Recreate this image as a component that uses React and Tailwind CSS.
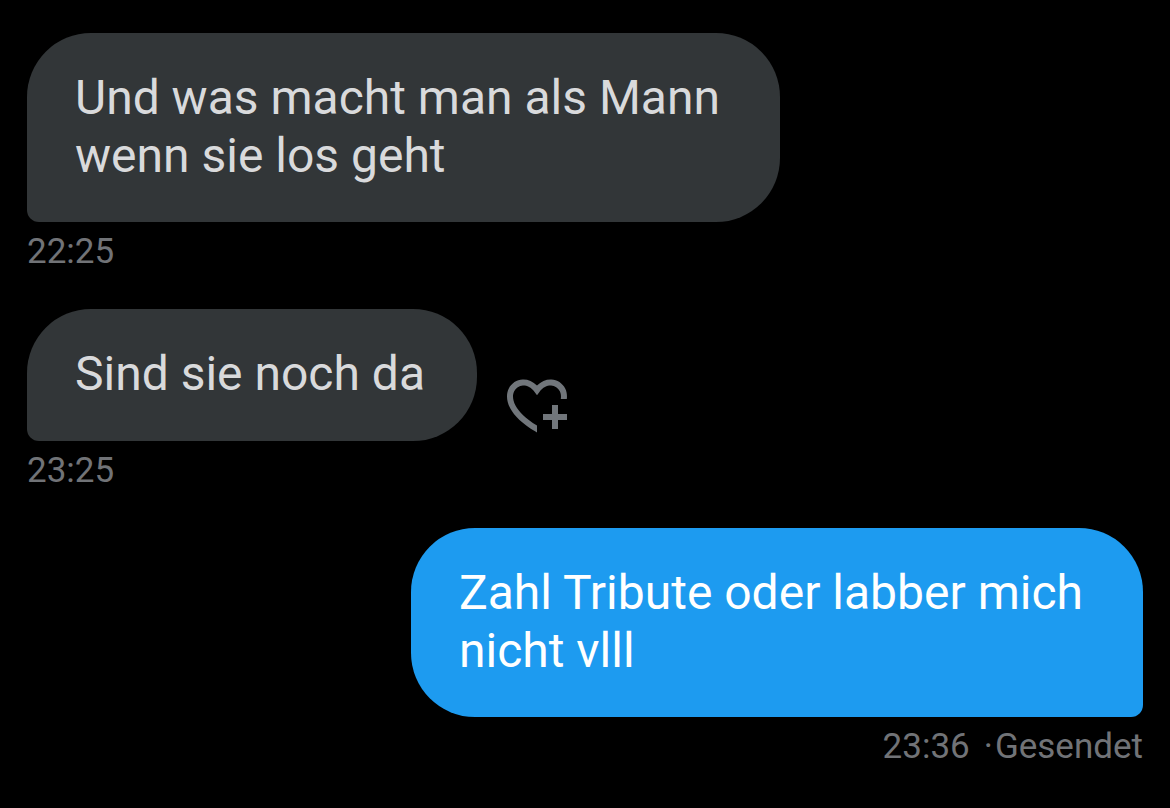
import React from "react";
import clsx from "clsx";

const messages = [
  { id: 1, text: "Und was macht man als Mann wenn sie los geht", time: "22:25", width: "w-[753px]" },
  { id: 2, text: "Sind sie noch da", time: "23:25", width: "w-[450px]", canReact: true },
  { id: 3, text: "Zahl Tribute oder labber mich nicht vlll", time: "23:36", width: "w-[732px]", mine: true, status: "Gesendet" },
];

function ReactButton() {
  return (
    <button type="button" aria-label="Reagieren" className="shrink-0 text-[#71767b]">
      <svg viewBox="0 0 24 24" className="size-18" fill="currentColor" aria-hidden="true">
        <path d="M17 12v3h-2.998v2h3v3h2v-3h3v-2h-3.001v-3H17zm-5 6.839c-3.871-2.34-6.053-4.639-7.127-6.609-1.112-2.04-1.031-3.7-.479-4.82.561-1.13 1.667-1.84 2.91-1.91 1.222-.06 2.68.51 3.892 2.16l.806 1.09.805-1.09c1.211-1.65 2.668-2.22 3.89-2.16 1.242.07 2.347.78 2.908 1.91.334.677.49 1.554.321 2.59h2.011c.153-1.283-.039-2.469-.539-3.48-.887-1.79-2.647-2.91-4.601-3.01-1.65-.09-3.367.56-4.796 2.01-1.43-1.45-3.147-2.1-4.798-2.01-1.954.1-3.714 1.22-4.601 3.01-.896 1.81-.846 4.17.514 6.67 1.353 2.48 4.003 5.12 8.382 7.67l.502.299v-2.32z" />
      </svg>
    </button>
  );
}

function Message({ message }) {
  const { text, time, width, mine, status, canReact } = message;

  return (
    <li className={clsx("flex flex-col", mine ? "items-end" : "items-start")}>
      <div className="flex max-w-full items-end gap-6">
        <p
          className={clsx(
            "min-h-33 max-w-full rounded-t-[64px] pt-9 pb-[37px] pl-12 pr-10 text-[48px] leading-[58px]",
            width,
            mine
              ? "rounded-bl-[64px] rounded-br-xl bg-[#1d9bf0] text-white"
              : "rounded-br-[64px] rounded-bl-xl bg-[#323638] text-[#d9dadc]"
          )}
        >
          {text}
        </p>
        {canReact && <ReactButton />}
      </div>
      <div className="mt-2 flex text-[35px] leading-11 text-[#717377]">
        <time>{time}</time>
        {status && (
          <>
            <span className="pl-3.5 pr-0.5">·</span>
            <span>{status}</span>
          </>
        )}
      </div>
    </li>
  );
}

export default function App() {
  return (
    <main className="min-h-screen bg-black px-[27px] pt-[33px] font-[Roboto,sans-serif]">
      <ul className="flex flex-col gap-[35px]">
        {messages.map((message) => (
          <Message key={message.id} message={message} />
        ))}
      </ul>
    </main>
  );
}
